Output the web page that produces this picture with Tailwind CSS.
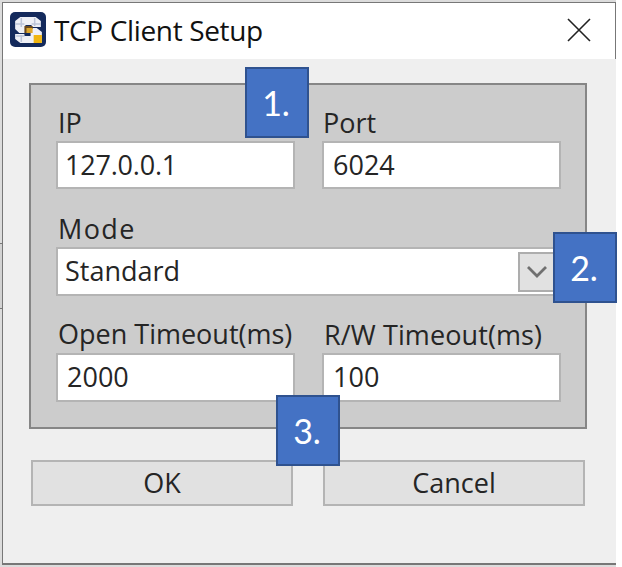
<!DOCTYPE html>
<html lang="en">
<head>
<meta charset="utf-8">
<title>TCP Client Setup</title>
<script src="https://cdn.jsdelivr.net/npm/@tailwindcss/browser@4"></script>
</head>
<body class="w-[622px] h-[567px] overflow-hidden bg-white font-['Open_Sans','Noto_Sans',sans-serif] text-[27px] leading-[36px] text-[#252525]">
<div class="relative w-[616px] h-[567px] bg-[#dcdcdc] pt-[2px] pl-[2px]">
  <div class="absolute left-0 top-[243px] w-[2px] h-[66px] border-y border-[#777] bg-[#d2d2d2]"></div>
  <main class="h-[563px] flex flex-col border-l border-t border-b-2 border-[#777] bg-[#efefef]">
    <header class="h-[56px] shrink-0 flex items-center bg-white border-r border-[#777] pl-[7px] pb-[3px]">
      <svg class="w-[36px] h-[35px] shrink-0" viewBox="0 0 35 35" preserveAspectRatio="none">
        <rect width="35" height="35" rx="5" fill="#142a5c"/>
        <path d="M10 5h15l5 4v6h-9v-2h-6v3h11l5 4v11H10l-5-4v-5h9v2h6v-3H9l-4-4V9z" fill="#eff0f6"/>
        <path d="M5 12h9M21 12h9M11 6v9M24 6v8M6 24h8M11 23v7" stroke="#bcc4d8" stroke-width="1.5"/>
        <path d="M14 14h8v3h-5v4h-3z" fill="#6c4a1d"/>
        <path d="M16 16h6v5h-6z" fill="#dca52b"/>
        <path d="M23 23h8v8h-8z" fill="#f0b50f"/>
      </svg>
      <h1 class="ml-[8px] text-[28px] whitespace-nowrap text-[#111] tracking-[-0.35px]">TCP Client Setup</h1>
      <svg class="ml-auto mr-[24px] w-[24px] h-[24px]" viewBox="0 0 24 24" fill="none" stroke="#222" stroke-width="1.6"><path d="M1 1l22 22M23 1L1 23"/></svg>
    </header>
    <section class="mt-[24px] ml-[26px] w-[558px] h-[346px] shrink-0 border-2 border-[#868686] bg-[#ccc] pl-[25px] pt-[19px]">
      <div class="flex gap-[27px]">
        <label class="w-[239px]"><span class="block h-[37px] pt-[1px] pl-[2px]">IP</span>
          <span class="flex items-center h-[48px] bg-white border-2 border-[#b4b4b4] pl-[7px] tracking-[-0.2px]">127.0.0.1</span></label>
        <label class="w-[239px]"><span class="block h-[37px] pt-[1px] pl-[1px]">Port</span>
          <span class="flex items-center h-[48px] bg-white border-2 border-[#b4b4b4] pl-[9px]">6024</span></label>
      </div>
      <div class="mt-[22px] w-[505px]">
        <span class="block h-[36px] pl-[2px] tracking-[1.4px]">Mode</span>
        <div class="flex items-center h-[49px] bg-white border-2 border-[#b4b4b4] pl-[7px]">
          <span class="pb-[1px]">Standard</span>
          <span class="ml-auto mr-[1px] w-[40px] h-[40px] flex items-center justify-center bg-[#e1e1e1] border-2 border-[#adadad] pr-[3px]">
            <svg class="w-[20px] h-[12px]" viewBox="0 0 20 12" fill="none" stroke="#707070" stroke-width="2.8"><path d="M1 1l9 9 9-9"/></svg>
          </span>
        </div>
      </div>
      <div class="mt-[20px] flex gap-[27px]">
        <label class="w-[239px]"><span class="block h-[37px] pl-[2px] whitespace-nowrap">Open Timeout(ms)</span>
          <span class="flex items-center h-[49px] bg-white border-2 border-[#b4b4b4] pl-[9px] pb-[2px]">2000</span></label>
        <label class="w-[239px]"><span class="block h-[37px] pt-[1px] pl-[2px] whitespace-nowrap tracking-[0.1px]">R/W Timeout(ms)</span>
          <span class="flex items-center h-[49px] bg-white border-2 border-[#b4b4b4] pl-[9px] pb-[2px]">100</span></label>
      </div>
    </section>
    <div class="mt-[31px] ml-[28px] flex gap-[30px]">
      <button class="w-[262px] h-[46px] border-2 border-[#b4b4b4] bg-[#e1e1e1]">OK</button>
      <button class="w-[262px] h-[46px] border-2 border-[#b4b4b4] bg-[#e1e1e1]">Cancel</button>
    </div>
  </main>
  <div class="absolute left-[245px] top-[67px] w-[64px] h-[71px] flex items-center justify-center bg-[#4472c4] border-2 border-[#2f528f] text-white font-[Lato] text-[34px] pr-[2px]">1.</div>
  <div class="absolute left-[553px] top-[232px] w-[64px] h-[71px] flex items-center justify-center bg-[#4472c4] border-2 border-[#2f528f] text-white font-[Lato] text-[34px] pr-[2px]">2.</div>
  <div class="absolute left-[276px] top-[395px] w-[64px] h-[71px] flex items-center justify-center bg-[#4472c4] border-2 border-[#2f528f] text-white font-[Lato] text-[34px] pr-[2px]">3.</div>
</div>
</body>
</html>
